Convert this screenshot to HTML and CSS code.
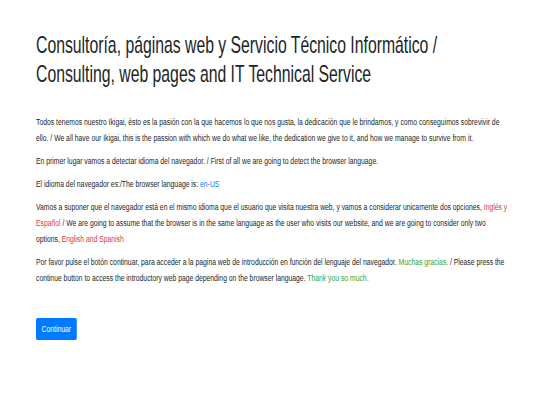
FILE: index.html
```html
<!DOCTYPE html>
<html lang="es">
<head>
<meta charset="utf-8">
<title>Consultoría, páginas web y Servicio Técnico Informático</title>
<link rel="stylesheet" href="styles.css">
</head>
<body>
<main class="page">
  <h1 class="title">Consultoría, páginas web y Servicio Técnico Informático / Consulting, web pages and IT Technical Service</h1>
  <div class="content">
    <p class="text">Todos tenemos nuestro Ikigai, ésto es la pasión con la que hacemos lo que nos gusta, la dedicación que le brindamos, y como conseguimos sobrevivir de ello. / We all have our Ikigai, this is the passion with which we do what we like, the dedication we give to it, and how we manage to survive from it.</p>
    <p class="text">En primer lugar vamos a detectar idioma del navegador. / First of all we are going to detect the browser language.</p>
    <p class="text">El idioma del navegador es:/The browser language is: <span class="blue">en-US</span></p>
    <p class="text">Vamos a suponer que el navegador está en el mismo idioma que el usuario que visita nuestra web, y vamos a considerar unicamente dos opciones, <span class="red">Inglés y Español</span> / We are going to assume that the browser is in the same language as the user who visits our website, and we are going to consider only two options, <span class="red">English and Spanish</span></p>
    <p class="text">Por favor pulse el botón continuar, para acceder a la pagina web de introducción en función del lenguaje del navegador. <span class="green">Muchas gracias.</span> / Please press the continue button to access the introductory web page depending on the browser language. <span class="green">Thank you so much.</span></p>
    <button class="btn" type="button">Continuar</button>
  </div>
</main>
</body>
</html>
```
FILE: styles.css
```css
html, body { margin: 0; padding: 0; background: #fff; }
body { color: #212529; font-family: "Liberation Sans", Arial, Helvetica, sans-serif; }
.page { padding: 30px 36px 0; }
.title {
  font-size: 24px;
  font-weight: 400;
  line-height: 29px;
  margin: 0 0 26px;
  color: #212529;
  width: 712px;
  transform: scaleX(0.657);
  transform-origin: 0 0;
}
.content {
  width: 592px;
  transform: scaleX(0.8);
  transform-origin: 0 0;
}
.text {
  font-size: 8.5px;
  line-height: 16px;
  margin: 0 0 7px;
}
.blue { color: #007bff; }
.red { color: #dc3545; }
.green { color: #28a745; }
.btn {
  margin-top: 25px;
  display: inline-block;
  font-family: inherit;
  font-size: 8.5px;
  line-height: 22px;
  height: 22px;
  padding: 0 7px;
  color: #fff;
  background: #007bff;
  border: 0;
  border-radius: 2px;
}
```
